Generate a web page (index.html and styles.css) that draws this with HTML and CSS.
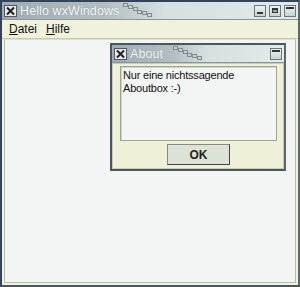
FILE: index.html
```html
<!DOCTYPE html>
<html>
<head>
<meta charset="utf-8">
<link rel="stylesheet" href="styles.css">
</head>
<body>
<div class="win">
  <div class="titlebar">
    <span class="closebtn"><svg width="11" height="10" viewBox="0 0 11 10"><path d="M2 1.5 L9 8.5 M9 1.5 L2 8.5" stroke="#222" stroke-width="2"/></svg></span>
    <span class="title">Hello wxWindows</span>
    <span class="deco"><i></i><i></i><i></i><i></i><i></i><i></i></span>
    <span class="spacer"></span>
    <span class="tbtn"><b class="min"></b></span>
    <span class="tbtn"><b class="max"></b></span>
    <span class="tbtn"><b class="shade"></b></span>
  </div>
  <div class="menubar">
    <span class="menu"><u>D</u>atei</span>
    <span class="menu"><u>H</u>ilfe</span>
  </div>
  <div class="client"></div>
</div>

<div class="dlg">
  <div class="titlebar dtitle">
    <span class="closebtn"><svg width="11" height="10" viewBox="0 0 11 10"><path d="M2 1.5 L9 8.5 M9 1.5 L2 8.5" stroke="#222" stroke-width="2"/></svg></span>
    <span class="title">About</span>
    <span class="deco"><i></i><i></i><i></i><i></i><i></i><i></i></span>
    <span class="spacer"></span>
    <span class="tbtn"><b class="shade"></b></span>
  </div>
  <div class="dbody">
    <div class="textbox">Nur eine nichtssagende<br>Aboutbox :-)</div>
    <div class="btnrow"><button class="ok">OK</button></div>
  </div>
</div>
</body>
</html>
```

FILE: styles.css
```css
* { box-sizing: border-box; }
html, body { margin: 0; padding: 0; width: 300px; height: 287px; overflow: hidden; background: #f2f5f3; }
body { font-family: "Liberation Sans", Arial, sans-serif; position: relative; }

.win {
  width: 300px; height: 287px;
  border: 2px solid #34435a;
  border-right-color: #5b6670;
  border-bottom-color: #4a5560;
  display: flex; flex-direction: column;
  background: #f0f2dc;
}
.titlebar {
  height: 18px;
  display: flex; align-items: center;
  padding: 0 2px 0 2px;
  background: linear-gradient(to right, #9eacb2 0%, #b2bec2 35%, #d6e0e0 55%, #e2eaea 100%);
  border-bottom: 1px solid #8a9698;
}
.closebtn {
  width: 13px; height: 12px;
  background: #e6ebe6;
  border: 1px solid #556;
  display: flex; align-items: center; justify-content: center;
  margin-right: 3px;
}
.title {
  color: #f2f5f5;
  font-size: 12.5px;
  letter-spacing: 0.1px;
  text-shadow: 0 0 1px #8c989c;
  white-space: nowrap;
}
.deco { position: relative; width: 30px; height: 14px; margin-left: 4px; align-self: flex-start; }
.deco i {
  position: absolute; width: 5px; height: 4px;
  border: 1px solid #7f8c90; background: #c8d2d4;
}
.deco i:nth-child(1) { left: 0; top: 1px; }
.deco i:nth-child(2) { left: 5px; top: 3px; }
.deco i:nth-child(3) { left: 10px; top: 5px; }
.deco i:nth-child(4) { left: 14px; top: 8px; }
.deco i:nth-child(5) { left: 19px; top: 9px; }
.deco i:nth-child(6) { left: 24px; top: 11px; }
.spacer { flex: 1; }
.tbtn {
  width: 12px; height: 12px; margin-left: 3px;
  border: 1px solid #6c787c;
  background: linear-gradient(#eef2f2, #c8d2d2);
  display: flex; align-items: center; justify-content: center;
}
.tbtn b { display: block; background: #333; }
.tbtn .min { width: 6px; height: 2px; margin-top: 4px; }
.tbtn .max { width: 6px; height: 5px; border: 1px solid #333; border-top-width: 2px; background: #9aa; }
.tbtn .shade { width: 8px; height: 2px; margin-top: -5px; }

.menubar {
  height: 19px;
  background: #f0f2dc;
  display: flex; align-items: center;
  padding-left: 7px;
  gap: 9px;
  font-size: 12px;
  color: #111;
  border-bottom: 1px solid #c4c8b4;
}
.menu u { text-decoration: underline; }
.client {
  flex: 1;
  margin: 0 2px 2px 2px;
  background: #f2f5f3;
  border: 1px solid #b4bcb4;
  border-top-color: #dadfd0;
}

.dlg {
  position: absolute; left: 110px; top: 43px;
  width: 176px; height: 128px;
  border: 2px solid #4a5660;
  border-right-color: #5b6670;
  display: flex; flex-direction: column;
  background: #eef0d8;
}
.dtitle { height: 18px; }
.dtitle .title { font-size: 12.5px; }
.dtitle .deco { margin-left: 10px; }
.dbody {
  flex: 1;
  display: flex; flex-direction: column;
  padding: 2px 6px 3px 7px;
  border: 1px solid #c9ccb4;
}
.textbox {
  flex: 1;
  background: #f2f5f3;
  border: 1px solid #9aa49a;
  box-shadow: inset 1px 1px 0 #cfd4c8;
  font-size: 11px;
  letter-spacing: -0.2px;
  line-height: 12.5px;
  padding: 2px 2px;
  color: #111;
}
.btnrow { display: flex; justify-content: center; padding-top: 3px; }
.ok {
  width: 63px; height: 21px;
  margin-left: 0;
  background: #dde2d6;
  border: 1px solid #444;
  border-top-color: #888; border-left-color: #888;
  font-family: "Liberation Sans", Arial, sans-serif;
  font-size: 12px; font-weight: bold; color: #222;
  padding: 0;
}
```
